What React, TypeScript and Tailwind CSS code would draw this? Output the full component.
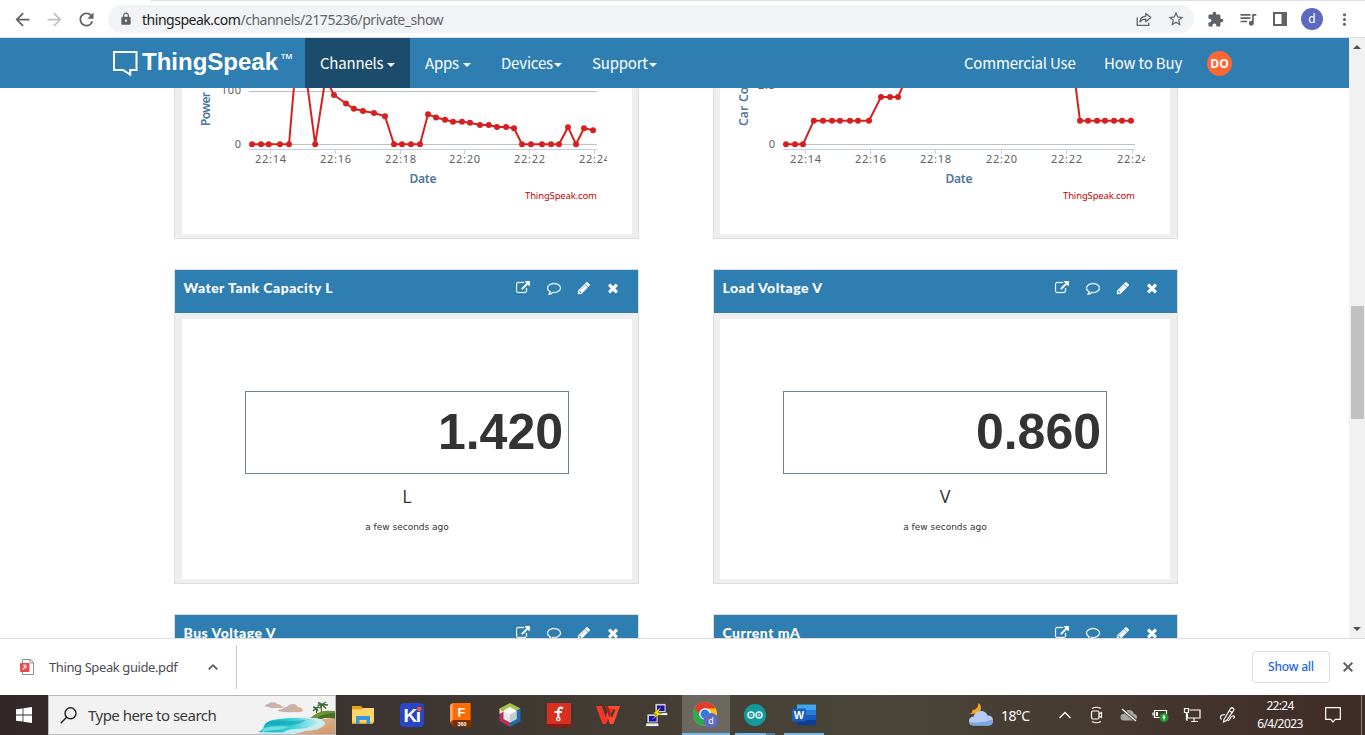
import type { ReactNode } from 'react';
import {
  MdArrowBack,
  MdArrowForward,
  MdRefresh,
  MdLock,
  MdStarBorder,
  MdExtension,
  MdQueueMusic,
  MdMoreVert,
} from 'react-icons/md';

type Point = [number, number];

const ICONS = {
  external:
    'M1408 928v320q0 119-84.5 203.5t-203.5 84.5h-832q-119 0-203.5-84.5t-84.5-203.5v-832q0-119 84.5-203.5t203.5-84.5h704q14 0 23 9t9 23v64q0 14-9 23t-23 9h-704q-66 0-113 47t-47 113v832q0 66 47 113t113 47h832q66 0 113-47t47-113v-320q0-14 9-23t23-9h64q14 0 23 9t9 23zm384-864v512q0 26-19 45t-45 19-45-19l-176-176-652 652q-10 10-23 10t-23-10l-114-114q-10-10-10-23t10-23l652-652-176-176q-19-19-19-45t19-45 45-19h512q26 0 45 19t19 45z',
  comment:
    'M896 384q-204 0-381.5 69.5t-282 187.5-104.5 255q0 112 71.5 213.5t201.5 175.5l87 50-27 96q-24 91-70 172 152-63 275-171l43-38 57 6q69 8 130 8 204 0 381.5-69.5t282-187.5 104.5-255-104.5-255-282-187.5-381.5-69.5zm896 512q0 174-120 321.5t-326 233-450 85.5q-70 0-145-8-198 175-460 242-49 14-114 22h-5q-15 0-27-10.5t-16-27.5v-1q-3-4-.5-12t2-10 4.5-9.5l6-9 7-8.5 8-9q7-8 31-34.5t34.5-38 31-39.5 32.5-51 27-59 26-76q-157-89-247.5-220t-90.5-281q0-174 120-321.5t326-233 450-85.5 450 85.5 326 233 120 321.5z',
  pencil:
    'M491 1536l91-91-235-235-91 91v107h128v128h107zm523-928q0-22-22-22-10 0-17 7l-542 542q-7 7-7 17 0 22 22 22 10 0 17-7l542-542q7-7 7-17zm-54-192l416 416-832 832h-416v-416zm683 96q0 53-37 90l-166 166-416-416 166-165q36-38 90-38 53 0 91 38l235 234q37 39 37 91z',
  times:
    'M1490 1322q0 40-28 68l-136 136q-28 28-68 28t-68-28l-294-294-294 294q-28 28-68 28t-68-28l-136-136q-28-28-28-68t28-68l294-294-294-294q-28-28-28-68t28-68l136-136q28-28 68-28t68 28l294 294 294-294q28-28 68-28t68 28l136 136q28 28 28 68t-28 68l-294 294 294 294q28 28 28 68z',
};

function Glyph({ d }: { d: string }) {
  return (
    <svg viewBox="0 0 1792 1792" className="size-3.5 fill-white stroke-white stroke-[30]">
      <path d={d} />
    </svg>
  );
}

/* ---------- Browser toolbar ---------- */

function BrowserBar() {
  return (
    <div className="flex h-[38px] shrink-0 flex-col border-b border-[#dadce0] bg-white">
      <div className="ml-[150px] h-px bg-[#dee1e6]" />
      <div className="flex flex-1 items-center text-[#5f6368]">
        <div className="flex w-[108px] items-center gap-[11px] pl-[11.5px]">
          <MdArrowBack size={21} />
          <MdArrowForward size={21} className="text-[#bdc1c6]" />
          <MdRefresh size={21} />
        </div>
        <div className="flex h-7 w-[1086px] items-center rounded-full bg-[#f1f3f4] pl-[11px] pr-[9px]">
          <MdLock size={14} />
          <span className="ml-[9px] flex-1 whitespace-nowrap font-['Noto_Sans'] text-[14px] tracking-[-0.48px] text-[#63676b]">
            <span className="text-[#202124]">thingspeak.com</span>/channels/2175236/private_show
          </span>
          <svg viewBox="0 0 16 16" className="mr-[15px] size-4 fill-none stroke-[#5f6368] stroke-[1.3]">
            <path d="M1.2 6.5v7.8h11.6v-2.6" />
            <path d="M4 10.8c.4-3.6 2.4-5.4 5.8-5.6V2.4l5 4.2-5 4.1V8.1C7.300 8.100 5.500 8.900 4 10.800z" strokeLinejoin="round" />
          </svg>
          <MdStarBorder size={18} />
        </div>
        <MdExtension size={17} className="ml-[13px]" />
        <MdQueueMusic size={20} className="ml-[14px]" />
        <svg viewBox="0 0 14 14" className="ml-[15px] size-3.5 fill-[#5f6368]">
          <path d="M0 0h14v14H0zM2 2v10h6.500V2z" fillRule="evenodd" />
        </svg>
        <div className="ml-[14px] flex size-[22px] items-center justify-center rounded-full bg-[#5c6bc0] font-['Noto_Sans'] text-[12px] text-white">
          d
        </div>
        <MdMoreVert size={19} className="ml-[12px]" />
      </div>
    </div>
  );
}

/* ---------- Site navigation ---------- */

function Caret() {
  return (
    <svg viewBox="0 0 8 4" className="mt-0.5 h-1 w-2 fill-white">
      <path d="M0 0h8L4 4z" />
    </svg>
  );
}

function NavBar() {
  return (
    <div className="flex h-[50px] shrink-0 items-stretch bg-[#2e7eb2] font-['Noto_Sans_CJK_SC','Noto_Sans',sans-serif] text-[15px] font-normal text-white">
      <div className="flex w-[305px] items-start pl-[113px] pt-[12px]">
        <svg viewBox="0 0 25 26" className="mt-px h-[26px] w-[25px] fill-none stroke-white stroke-2">
          <path d="M1 1h22.500v18h-6.300v4.700l-7.200-4.700H1z" />
        </svg>
        <span className="ml-1 mt-px font-['Liberation_Sans',sans-serif] text-[24px] font-bold leading-[22px]">ThingSpeak</span>
        <span className="ml-0.5 mt-1 font-['Liberation_Sans',sans-serif] text-[13px] font-normal leading-[10px]">™</span>
      </div>
      <div className="flex w-[105px] items-center gap-[5px] bg-[#1c4c6b] pl-[15px] pt-px">
        <span className="w-[62px] whitespace-nowrap tracking-[-0.2px]">Channels</span>
        <Caret />
      </div>
      <div className="flex w-[77px] items-center gap-[5px] pl-[15px] pt-px">
        <span className="w-[33px] whitespace-nowrap tracking-[-0.2px]">Apps</span>
        <Caret />
      </div>
      <div className="flex w-[90px] items-center gap-px pl-[14px] pt-px">
        <span className="w-[52px] whitespace-nowrap tracking-[-0.2px]">Devices</span>
        <Caret />
      </div>
      <div className="flex flex-1 items-center gap-px pl-[15px] pt-px">
        <span className="w-[56px] whitespace-nowrap tracking-[-0.2px]">Support</span>
        <Caret />
      </div>
      <div className="flex items-center whitespace-nowrap pr-[117px] pt-px tracking-[-0.2px]">
        <span className="w-[140px]">Commercial Use</span>
        <span className="w-[103px]">How to Buy</span>
        <span className="flex size-[25px] items-center justify-center rounded-full bg-[#ff6633] font-['Open_Sans'] text-[12px] font-bold tracking-normal">
          DO
        </span>
      </div>
    </div>
  );
}

/* ---------- Charts ---------- */

interface ChartProps {
  left: number;
  axis: [number, number];
  ticks: number[];
  line: Point[];
  yTitle: string;
  yTitleX: number;
  yTitleLength: number;
  yTop: string;
  yTopBaseline: number;
  yTopX: number;
  zeroX: number;
  grid?: number;
  clip: number;
  id: string;
}

const TIMES = ['22:14', '22:16', '22:18', '22:20', '22:22', '22:24'];

function Chart(p: ChartProps) {
  const mid = (p.axis[0] + p.axis[1]) / 2;
  return (
    <svg viewBox={`${p.left} 88 450 146`} className="h-[146px] w-[450px] font-['Noto_Sans',sans-serif]">
      <clipPath id={p.id}>
        <rect x={p.left} y="88" width={p.clip - p.left} height="146" />
      </clipPath>
      <g stroke="#c0c0c0">
        {p.grid && <path d={`M${p.axis[0]} ${p.grid}H${p.axis[1]}`} />}
        <path d={`M${p.axis[0]} 144.500H${p.axis[1]}`} />
      </g>
      <g stroke="#c0d0e0">
        <path d={`M${p.axis[0]} 149.500H${p.axis[1]}`} />
        {p.ticks.map((x) => (
          <path key={x} d={`M${x + 0.5} 149v5`} />
        ))}
      </g>
      <g fontSize="11" fill="#606060" clipPath={`url(#${p.id})`}>
        {p.ticks.map((x, i) => (
          <text key={x} x={x - 15} y="163" textLength="31">
            {TIMES[i]}
          </text>
        ))}
        <text x={p.zeroX} y="148" textAnchor="end">0</text>
        <text x={p.yTopX} y={p.yTopBaseline} textLength={p.yTop === '100' ? 20 : 17}>
          {p.yTop}
        </text>
      </g>
      <g fontSize="12" fontWeight="600" fill="#4d759e">
        <text x={mid - 13.500} y="183" textLength="27">Date</text>
        <text transform={`translate(${p.yTitleX} 126) rotate(-90)`} textLength={p.yTitleLength}>
          {p.yTitle}
        </text>
      </g>
      <text x={p.axis[1] - 72} y="199" fontSize="9.500" fill="#cc0000" textLength="72">
        ThingSpeak.com
      </text>
      <polyline
        points={p.line.map((pt) => pt.join(',')).join(' ')}
        fill="none"
        stroke="#d62020"
        strokeWidth="2"
        strokeLinejoin="round"
      />
      {p.line.map(([x, y]) => (
        <circle key={x} cx={x} cy={y} r="3" fill="#d62020" />
      ))}
    </svg>
  );
}

const POWER: Point[] = [
  [252, 144.3], [261, 144.3], [268.7, 144.3], [280, 144.3], [289, 144.3],
  [298, 40], [304, 60], [315.2, 144.3], [325.5, 78], [334, 95],
  [346, 103.5], [353.9, 108.8], [363, 111], [374, 113], [385, 116.2],
  [394, 144.3], [402, 144.3], [411, 144.3], [420, 144.3],
  [428, 114.2], [436, 117.5], [445, 119.7], [453, 121.8], [462, 121.8], [470, 122.8],
  [480, 125], [488.800, 125], [497, 127], [506, 127], [514, 128.3],
  [522, 144.3], [531, 144.3], [542, 144.3], [551, 144.3], [559, 144.3],
  [568, 127.2], [576, 144.3], [584, 128.2], [593, 130.3],
];

const COUNT: Point[] = [
  [786, 144.3], [795, 144.3], [803, 144.3],
  [813.8, 120.7], [823, 120.7], [832, 120.7], [840, 120.7], [850, 120.7], [858, 120.7], [869, 120.7],
  [881, 97], [890, 97], [898, 97],
  [909, 72], [1071, 50],
  [1080, 120.7], [1088, 120.7], [1097, 120.7], [1105, 120.7], [1114, 120.7], [1122, 120.7], [1131, 120.7],
];

/* ---------- Channel cards ---------- */

function CardHeader({ title }: { title: string }) {
  return (
    <div className="flex h-[43px] items-start bg-[#2e7eb2] pl-2 pt-[11px]">
      <span className="w-[333px] whitespace-nowrap pl-[0.5px] font-['Lato',sans-serif] text-[14px] font-black leading-[14px] tracking-[0.48px] text-white">
        {title}
      </span>
      <div className="-mt-[0.5px] flex items-center gap-[16.500px]">
        <Glyph d={ICONS.external} />
        <Glyph d={ICONS.comment} />
        <Glyph d={ICONS.pencil} />
        <span className="-ml-0.5">
          <Glyph d={ICONS.times} />
        </span>
      </div>
    </div>
  );
}

function GaugeCard({ title, value, unit, side }: { title: string; value: string; unit: string; side: 'l' | 'r' }) {
  return (
    <div className="h-[315px] w-[465px] border border-[#ddd] bg-[#eee]">
      <CardHeader title={title} />
      <div className={side === 'l' ? 'mt-1.5 pl-[7px]' : 'mt-1.5 pl-1.5'}>
        <div className="flex h-[260px] w-[450px] flex-col items-center bg-white pt-[72px] text-[#333]">
          <div className="h-[83px] w-[324px] border border-[#708090] pr-[5px] text-right font-['Liberation_Sans',sans-serif] text-[50px] font-bold leading-[81px]">
            {value}
          </div>
          <div className="mt-[10px] font-['Open_Sans',sans-serif] text-[18px] font-normal leading-6">{unit}</div>
          <div className="mt-[13px] font-['DejaVu_Sans',sans-serif] text-[9px] leading-3">
            a few seconds ago
          </div>
        </div>
      </div>
    </div>
  );
}

function ChartFrame({ side, children }: { side: 'l' | 'r'; children: ReactNode }) {
  return (
    <div className="h-[151px] w-[465px] border-x border-b border-[#ddd] bg-[#eee]">
      <div className={side === 'l' ? 'pl-[7px]' : 'pl-1.5'}>
        <div className="h-[146px] w-[450px] bg-white">{children}</div>
      </div>
    </div>
  );
}

function ClippedCard({ title }: { title: string }) {
  return (
    <div className="h-[315px] w-[465px] border border-[#ddd] bg-[#eee]">
      <CardHeader title={title} />
    </div>
  );
}

function Scrollbar() {
  return (
    <div className="flex h-full w-4 flex-col items-center bg-[#f1f1f1] py-[7px]">
      <svg viewBox="0 0 8 4" className="h-1 w-2 fill-[#505050]">
        <path d="M0 4h8L4 0z" />
      </svg>
      <div className="mt-[257px] h-[113px] w-[13px] bg-[#c1c1c1]" />
      <svg viewBox="0 0 8 4" className="mt-auto h-1 w-2 fill-[#505050]">
        <path d="M0 0h8L4 4z" />
      </svg>
    </div>
  );
}

/* ---------- Downloads bar ---------- */

function DownloadBar() {
  return (
    <div className="flex h-[57px] shrink-0 items-center border-t border-[#dadce0] bg-white font-['Noto_Sans',sans-serif]">
      <svg viewBox="0 0 14 16" className="-mt-px ml-5 h-4 w-3.5">
        <path d="M2.500.5h8l3 3v12h-11z" fill="#fff" stroke="#8d8d8d" />
        <path d="M10 .5v3.500h3.500" fill="none" stroke="#8d8d8d" />
        <rect y="4" width="9.500" height="9" rx="1" fill="#ec4a4c" />
        <path d="M3 6.200h3.200v2.600H4.400M3 11V9.200h1.500V6.500" fill="none" stroke="#fff" strokeWidth=".9" />
      </svg>
      <span className="ml-[15px] w-[159px] whitespace-nowrap pt-0.5 text-[13px] tracking-[-0.4px] text-[#4a4d51]">
        Thing Speak guide.pdf
      </span>
      <svg viewBox="0 0 10 6" className="h-1.5 w-2.5 fill-none stroke-[#5f6368] stroke-[1.8]">
        <path d="M.7 5.500L5 1.200l4.300 4.300" />
      </svg>
      <div className="ml-[18px] h-11 w-px bg-[#c6c8cb]" />
      <div className="ml-auto flex h-8 w-[78px] items-center justify-center rounded border border-[#dadce0] text-[12px] font-medium tracking-[-0.2px] text-[#1a66e8]">
        Show all
      </div>
      <svg viewBox="0 0 10 10" className="-mt-px ml-[13px] mr-[12px] size-2.5 stroke-[#5f6368] stroke-2">
        <path d="M.7.7l8.600 8.600M9.300.7L.7 9.300" />
      </svg>
    </div>
  );
}

/* ---------- Taskbar ---------- */

function Beach() {
  return (
    <svg viewBox="0 0 80 38" className="h-[38px] w-20">
      <defs>
        <linearGradient id="sea" x1="0" x2="1">
          <stop offset="0" stopColor="#10b3bf" />
          <stop offset=".55" stopColor="#35cdd6" />
          <stop offset="1" stopColor="#b5eaf0" />
        </linearGradient>
        <linearGradient id="cloud" x1="0" x2="1">
          <stop offset="0" stopColor="#b9b2c0" />
          <stop offset="1" stopColor="#e2ae96" />
        </linearGradient>
        <linearGradient id="sand" x1="0" x2="1" y1="0" y2="1">
          <stop offset="0" stopColor="#e9c6a4" />
          <stop offset="1" stopColor="#cf9468" />
        </linearGradient>
      </defs>
      <g fill="url(#cloud)">
        <path d="M10 10.500q0-2 3-2.500 2-2.500 5-1.500 3-1 4 1.500 4 0 4 2 4 .5 2 2H15q-1-1.500-5-1.500z" />
        <path d="M23 15q0-2 5-2 1-2.500 4-2 1-3 6-3 4 0 4.500 3 5 0 5.500 4-3 2-9 1-8 1-16-1z" />
      </g>
      <path d="M34 38q24-2 30-14l16-3v17z" fill="url(#sand)" />
      <path d="M55 22q5-4.500 10-6 5-2 15-1v7.500q-8-1.500-14 .5-6-1.500-11-1z" fill="#6b9433" />
      <path d="M62 22q4-4 18-5v5.500q-8-1.500-14 .5z" fill="#466f25" />
      <path d="M1 38q4-1 7-5 2-8 12-9.500 24-4 42-1 9 2 8 6-5 6-20 6.500-6 1-10 3z" fill="#c4edf0" />
      <path d="M3 36q5-2 6-6 2-5.500 12-6.500 24-3 38 .5 6 2 1 4.500-7 4.500-20 4.500-7 0-12 3.500z" fill="url(#sea)" />
      <path d="M10 28q4-4 14-3.500 14 1 27-.5-8 6-24 5.500-9-.5-17-1.500z" fill="#0b9fae" opacity=".55" />
      <path d="M8 32q12-3 26-1-8 3-14 3-6 .5-13 2z" fill="#7fe6e6" opacity=".8" />
      <path d="M67 9q-1.500 3-.5 7M61 12q1 2 .5 5" fill="none" stroke="#6d4a27" strokeWidth="1.100" />
      <path
        d="M63 6.500l4 2m0 0l4-2.500m-4 2.500l6 .5m-6-.5l4 4m-4-4l-4.500 1m4.500-1l-2.500 4M58 11l3 1m0 0l3-1m-3 1l2 3m-2-3l-3 3"
        fill="none"
        stroke="#357032"
        strokeWidth="1.400"
      />
    </svg>
  );
}

function ExplorerIcon() {
  return (
    <svg viewBox="0 0 24 24" className="size-6">
      <path d="M1 3h9l1.500 2H22v16H1z" fill="#e8a417" />
      <path d="M1 6.500h10l1-1.500h11v14.500H1z" fill="#ffd667" />
      <path d="M5 13h14v8h-3.500v-4h-7v4H5z" fill="#3a96dd" />
    </svg>
  );
}

function KiCadIcon() {
  return (
    <svg viewBox="0 0 24 24" className="size-6">
      <rect width="24" height="24" rx="4" fill="#2a46c8" />
      <text x="3.500" y="19" fontSize="19" fontWeight="700" fill="#fff" fontFamily="Liberation Sans, sans-serif" textLength="17.500">
        Kı
      </text>
      <circle cx="19.300" cy="6" r="2.300" fill="#ff5a1f" />
    </svg>
  );
}

function FusionIcon() {
  return (
    <svg viewBox="0 0 24 24" className="size-6">
      <path d="M1 2l3-2h18v18l-2 5H4L1 19z" fill="#c44c05" />
      <path d="M4 0h17v17H4z" fill="#ff6b00" />
      <path d="M1 2l3-2v17l-3 2z" fill="#ffa15c" />
      <path d="M4 17h17l2 2v5H3z" fill="#7a2e02" />
      <text x="12.500" y="13.500" fontSize="13" fontWeight="700" fill="#fff" textAnchor="middle" fontFamily="Liberation Sans, sans-serif">F</text>
      <text x="13" y="22.500" fontSize="5.500" fontWeight="700" fill="#fff" textAnchor="middle" fontFamily="Liberation Sans, sans-serif">360</text>
    </svg>
  );
}

function NetBeansIcon() {
  return (
    <svg viewBox="0 0 24 24" className="size-6">
      <path d="M12 0L1.500 5.500 12 12l10.500-6.500z" fill="#a5c24a" />
      <path d="M1.500 5.500V18L12 24V12z" fill="#b5305a" />
      <path d="M22.500 5.500V18L12 24V12z" fill="#1d6db2" />
      <path d="M1.500 5.500V11L6 8.500z" fill="#dfe8b7" />
      <path d="M12 4L5.500 8v8L12 19.500l6.500-3.500V8z" fill="#e5e9ec" />
      <path d="M12 4L5.500 8 12 11.500 18.500 8z" fill="#fff" />
      <path d="M12 11.500v8l6.500-3.500V8z" fill="#c6ccd1" />
    </svg>
  );
}

function FritzingIcon() {
  return (
    <svg viewBox="0 0 24 24" className="size-6">
      <path d="M0 0h24v24H0z" fill="#d8301f" />
      <path d="M0 21h24v3H0z" fill="#8e1a10" />
      <path d="M16 5.500c-3-2-4.700-.5-4.700 2.500v6.500M7.500 9h7.500" fill="none" stroke="#fff" strokeWidth="2.200" />
      <circle cx="11.300" cy="16" r="1.700" fill="none" stroke="#fff" strokeWidth="1.300" />
    </svg>
  );
}

function WpsIcon() {
  return (
    <svg viewBox="0 0 24 24" className="size-6">
      <path d="M0 3h6l3.500 11L13 7h4l-7 14H6.500z" fill="#f5372a" />
      <path d="M9 3h15l-6.500 18H14L10.500 11l2-4 3.500 8 3.500-8.500H10.500z" fill="#ff4a33" />
      <path d="M9 3h3l3 8-1.500 4z" fill="#b81a12" />
    </svg>
  );
}

function PuttyIcon() {
  return (
    <svg viewBox="0 0 24 24" className="size-6">
      <g stroke="#222" strokeWidth=".6">
        <path d="M10 .5h11V9.500H10z" fill="#d6d2c4" />
        <path d="M11 9.500h11.500l.5 3H10z" fill="#eee" />
        <path d="M2 11h11v9H2z" fill="#d6d2c4" />
        <path d="M1 20h12.500l.5 3.500H.5z" fill="#eee" />
      </g>
      <path d="M12 2.500h7.500v5.500H12zM4 13h7.500v5.500H4z" fill="#1010c8" />
      <path d="M16 4l-8 6.500 4 .5-5 5.500 10-6.500-4-.5z" fill="#ffe600" stroke="#6e6300" strokeWidth=".5" />
    </svg>
  );
}

function ChromeIcon() {
  return (
    <svg viewBox="0 0 26 26" className="size-[26px]">
      <circle cx="12" cy="12" r="12" fill="#fbc116" />
      <path d="M1.600 6A12 12 0 0 0 12 24l5.200-9L12 12z" fill="#2da94f" />
      <path d="M1.600 6L7 15l5-3z" fill="#2da94f" />
      <path d="M12 6.500h10.600A12 12 0 0 0 1.600 6l5 7z" fill="#e33b2e" />
      <circle cx="12" cy="12" r="5.800" fill="#fff" />
      <circle cx="12" cy="12" r="4.500" fill="#2a7de1" />
      <circle cx="18" cy="18.500" r="7.500" fill="#5c6bc0" />
      <text x="18" y="22" fontSize="9" fill="#fff" textAnchor="middle" fontFamily="Noto Sans, sans-serif">d</text>
    </svg>
  );
}

function ArduinoIcon() {
  return (
    <svg viewBox="0 0 24 24" className="size-6">
      <circle cx="12" cy="12" r="11" fill="#149a9d" />
      <g fill="none" stroke="#e8f5f5" strokeWidth="1.500">
        <circle cx="8" cy="12" r="3" />
        <circle cx="16" cy="12" r="3" />
      </g>
      <path d="M6.800 12h2.400M14.800 12h2.400M16 10.800v2.400" stroke="#e8f5f5" strokeWidth=".7" />
    </svg>
  );
}

function WordIcon() {
  return (
    <svg viewBox="0 0 24 24" className="size-6">
      <path d="M5 1.500h19V7H5z" fill="#41a5ee" />
      <path d="M5 7h19v5H5z" fill="#2b7cd3" />
      <path d="M5 12h19v5H5z" fill="#185abd" />
      <path d="M5 17h19v5.500H5z" fill="#103f91" />
      <rect y="5.500" width="14" height="13" rx="1" fill="#1b5dbe" />
      <text x="7" y="16" fontSize="11" fontWeight="700" fill="#fff" textAnchor="middle" fontFamily="Liberation Sans, sans-serif">W</text>
    </svg>
  );
}

function TaskButton({ children, active, bar }: { children: ReactNode; active?: boolean; bar?: ReactNode }) {
  return (
    <div className={active ? 'flex h-10 w-12 flex-col items-center bg-[#6c685f]' : 'flex h-10 w-12 flex-col items-center'}>
      <div className="flex h-[38px] items-center pt-0.5">{children}</div>
      {bar}
    </div>
  );
}

function Tray() {
  return (
    <div className="ml-auto flex h-10 items-center font-['Noto_Sans',sans-serif] text-white">
      <svg viewBox="0 0 26 24" className="-mt-0.5 h-6 w-[26px]">
        <path d="M10.500 1c4 3 3 9-1.500 10.500L1 12q3.500-.5 3.500-4Q10 8 10.500 1z" fill="#f5a623" />
        <path d="M6 23.500q-5 0-5-4.500 0-4 4.500-4.500Q7.500 9 13 9q5 0 6.500 4.500 5.500 0 5.500 5t-5 5z" fill="#b5cdf5" />
        <path d="M6 23.500q-4.500 0-5-3.500 12 2 24-2.500 0 6-5 6z" fill="#7ea5e6" />
      </svg>
      <span className="ml-[7px] w-[58px] text-[14px] tracking-[-0.6px]">18°C</span>
      <svg viewBox="0 0 12 8" className="h-2 w-3 fill-none stroke-white stroke-[1.3]">
        <path d="M.5 7L6 1.500 11.500 7" />
      </svg>
      <svg viewBox="0 0 14 18" className="ml-[19px] h-[18px] w-3.5 fill-none stroke-white stroke-[1.2]">
        <rect x="1.500" y="5" width="7.500" height="8" rx="1.500" />
        <path d="M9 8l2.500-1.500v5L9 10M2 2.500Q6.500 0 11 2.500M2 15.500q4.500 2.500 9 0" />
      </svg>
      <svg viewBox="0 0 18 14" className="ml-[16px] h-3.5 w-[18px]">
        <path d="M4 12.500Q.5 12.500.5 9T4 6q1-4 5-4 4 0 5 4 3 .3 3 3.300t-3.500 3.200z" fill="#a9a69f" />
        <path d="M2 1l14 12" stroke="#464236" strokeWidth="3" />
        <path d="M2 1l14 12" stroke="#fff" strokeWidth="1.200" />
      </svg>
      <svg viewBox="0 0 18 16" className="ml-[14px] h-4 w-[18px]">
        <path d="M2.500 3.500h12v7h-12zM1 5.500v3" fill="none" stroke="#fff" strokeWidth="1.200" />
        <path d="M4 5h2v4H4z" fill="#fff" />
        <circle cx="12" cy="10.500" r="4.500" fill="#139a25" />
        <path d="M12 7.800q2.500 3 0 4.500-2.500-1.500 0-4.500zM12 11v3" fill="#fff" stroke="#fff" strokeWidth=".5" />
      </svg>
      <svg viewBox="0 0 18 16" className="ml-[13px] h-4 w-[18px] fill-none stroke-white stroke-[1.2]">
        <path d="M6.500 3H17v8H4.500V6.500M8 14.500h7M11 11v3.500M1.500 1.500h4v4h-4zM3.500 5.500V13h1.500" />
      </svg>
      <svg viewBox="0 0 18 18" className="ml-[18px] h-[18px] w-[18px] fill-none stroke-white stroke-[1.2]">
        <path d="M5 13.500L11.500 2.500q1.500-1.500 3 0 1 1.200 0 2.200L7.500 14.500 4.500 16zM6 8.500C1 8.500.5 12 2.500 13.500M8.500 14.500c3 1 2-4 5-4.500 2.500-.5 2.500 2 .5 2.500M10 4.500l3 2" />
      </svg>
      <div className="ml-[15px] flex w-[56px] flex-col items-center whitespace-nowrap text-[12px] leading-[18px]">
        <span className="tracking-[-0.7px]">22:24</span>
        <span className="tracking-[-0.55px]">6/4/2023</span>
      </div>
      <svg viewBox="0 0 16 16" className="ml-[17px] mr-[20px] size-4 fill-none stroke-white stroke-[1.2]">
        <path d="M.7.7h14.600v11.600h-5L8 15l-2.300-2.700h-5z" />
      </svg>
      <div className="mr-[3px] h-10 w-px bg-[#8c8079]" />
    </div>
  );
}

function Taskbar() {
  return (
    <div className="flex h-10 shrink-0 bg-linear-to-r from-[#32282a] via-[#4a4538] via-65% to-[#3f2b27]">
      <div className="flex w-12 items-center justify-center">
        <svg viewBox="0 0 16 16" className="size-4 fill-white">
          <path d="M0 2.300L6.600 1.400v6.200H0zM7.400 1.300L16 0v7.600H7.400zM0 8.400h6.600v6.200L0 13.700zM7.400 8.400H16V16l-8.600-1.300z" />
        </svg>
      </div>
      <div className="flex h-10 w-[288px] items-center border border-[#b9b9b9] bg-[#f2f2f2]">
        <svg viewBox="0 0 17 17" className="ml-[11px] size-[17px] fill-none stroke-[#222] stroke-[1.4]">
          <circle cx="10.500" cy="6.300" r="5.500" />
          <path d="M6.600 10.300L.8 16.300" />
        </svg>
        <span className="ml-[11px] flex-1 whitespace-nowrap font-['Noto_Sans',sans-serif] text-[15px] tracking-[-0.52px] text-[#3a3a3a]">
          Type here to search
        </span>
        <Beach />
      </div>
      <div className="ml-[3px] flex gap-px">
        <TaskButton><ExplorerIcon /></TaskButton>
        <TaskButton><KiCadIcon /></TaskButton>
        <TaskButton><FusionIcon /></TaskButton>
        <TaskButton><NetBeansIcon /></TaskButton>
        <TaskButton><FritzingIcon /></TaskButton>
        <TaskButton><WpsIcon /></TaskButton>
        <TaskButton><PuttyIcon /></TaskButton>
        <TaskButton active bar={<div className="h-0.5 w-12 bg-[#76b9ed]" />}><ChromeIcon /></TaskButton>
        <TaskButton
          bar={
            <div className="flex h-0.5 w-10">
              <div className="w-[31px] bg-[#76b9ed]" />
              <div className="w-[9px] bg-[#557f9e]" />
            </div>
          }
        >
          <ArduinoIcon />
        </TaskButton>
        <TaskButton bar={<div className="h-0.5 w-10 bg-[#76b9ed]" />}><WordIcon /></TaskButton>
      </div>
      <Tray />
    </div>
  );
}

export default function App() {
  return (
    <div className="flex h-[735px] w-[1365px] flex-col overflow-hidden bg-white">
      <BrowserBar />
      <div className="flex h-[600px] shrink-0">
        <div className="flex w-[1349px] flex-col overflow-hidden">
          <NavBar />
          <div className="grid shrink-0 grid-cols-[465px_465px] gap-x-[74px] gap-y-[30px] pl-[174px]">
            <ChartFrame side="l">
              <Chart
                id="powerClip"
                left={182}
                axis={[249, 597]}
                ticks={[270, 335, 400, 464, 529, 594]}
                line={POWER}
                yTitle="Power"
                yTitleX={210}
                yTitleLength={34}
                yTop="100"
                yTopBaseline={94}
                yTopX={221}
                zeroX={241}
                grid={91.5}
                clip={607}
              />
            </ChartFrame>
            <ChartFrame side="r">
              <Chart
                id="countClip"
                left={720}
                axis={[783, 1135]}
                ticks={[805, 870, 935, 1001, 1066, 1132]}
                line={COUNT}
                yTitle="Car Count"
                yTitleX={748}
                yTitleLength={60}
                yTop="2.5"
                yTopBaseline={89}
                yTopX={758}
                zeroX={775}
                clip={1145}
              />
            </ChartFrame>
            <GaugeCard title="Water Tank Capacity L" value="1.420" unit="L" side="l" />
            <GaugeCard title="Load Voltage V" value="0.860" unit="V" side="r" />
            <ClippedCard title="Bus Voltage V" />
            <ClippedCard title="Current mA" />
          </div>
        </div>
        <Scrollbar />
      </div>
      <DownloadBar />
      <Taskbar />
    </div>
  );
}
